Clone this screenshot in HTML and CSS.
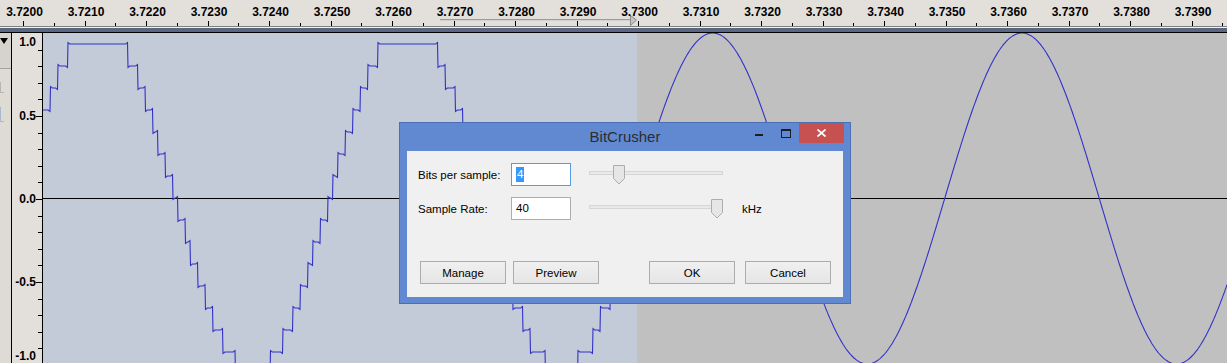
FILE: index.html
```html
<!DOCTYPE html>
<html lang="en">
<head>
  <meta charset="UTF-8" />
  <meta name="viewport" content="width=device-width, initial-scale=1.0"/>
  <title>BitCrusher</title>
  <link rel="stylesheet" href="styles.css">
</head>
<body>
  <div class="app">
    <div class="timeline">
      <svg class="ruler-marks" id="ruler-marks" width="1227" height="26">
        <line x1="440" y1="19.5" x2="631" y2="19.5" stroke="#9c9c9c"/>
        <line x1="440" y1="20.5" x2="631" y2="20.5" stroke="#d2d2d2"/>
        <polygon points="630.5,15.5 636.5,20 630.5,25.5" fill="#c4c4c4" stroke="#8c8c8c"/>
      </svg>
      <div class="ruler-labels">
        <span>3.7200</span><span>3.7210</span><span>3.7220</span><span>3.7230</span><span>3.7240</span>
        <span>3.7250</span><span>3.7260</span><span>3.7270</span><span>3.7280</span><span>3.7290</span>
        <span>3.7300</span><span>3.7310</span><span>3.7320</span><span>3.7330</span><span>3.7340</span>
        <span>3.7350</span><span>3.7360</span><span>3.7370</span><span>3.7380</span><span>3.7390</span>
      </div>
    </div>
    <div class="band"></div>

    <div class="track">
      <div class="track-ctrl">
        <div class="ctrl-head"><span class="drop"></span></div>
        <div class="ctrl-body">
          <span class="ghost ghost-l"></span>
          <span class="ghost ghost-r"></span>
        </div>
      </div>
      <div class="vruler">
        <svg class="vticks" id="vticks" width="30" height="330"></svg>
        <div class="vlabels">
          <span>1.0</span>
          <span>0.5</span>
          <span>0.0</span>
          <span>-0.5</span>
          <span>-1.0</span>
        </div>
      </div>
      <div class="wave">
        <svg id="wave" width="1184" height="330" viewBox="43 33 1184 330">
          <rect x="43" y="33" width="594" height="330" fill="#c3cad8"/>
          <rect x="637" y="33" width="590" height="330" fill="#c0c0c0"/>
          <line x1="43" y1="198.5" x2="1227" y2="198.5" stroke="#000"/>
          <polyline id="crushed" fill="none" stroke="#3232c8" stroke-width="1.1"/>
          <polyline id="clean" fill="none" stroke="#3232c8" stroke-width="1.1"/>
        </svg>
      </div>
    </div>

    <div class="dialog">
      <div class="titlebar">
        <span></span>
        <span class="title">BitCrusher</span>
        <div class="caption">
          <span class="cap-btn"><span class="min-icon"></span></span>
          <span class="cap-btn"><span class="max-icon"></span></span>
          <span class="cap-btn close">
            <svg width="9" height="8" viewBox="0 0 9 8"><path d="M0.5 0.5 L8.5 7.5 M8.5 0.5 L0.5 7.5" stroke="#fff" stroke-width="1.7"/></svg>
          </span>
        </div>
      </div>
      <div class="client">
        <div class="row">
          <span class="lbl">Bits per sample:</span>
          <div class="field focused"><span class="sel">4</span></div>
          <div class="slider">
            <div class="track-line"></div>
            <svg class="thumb" style="left: 24px" width="12" height="20" viewBox="0 0 12 20"><path d="M0.5 0.5 H11.5 V13.5 L6 19 L0.5 13.5 Z" fill="#e6e6e6" stroke="#adadad"/></svg>
          </div>
        </div>
        <div class="row">
          <span class="lbl">Sample Rate:</span>
          <div class="field">40</div>
          <div class="slider">
            <div class="track-line"></div>
            <svg class="thumb" style="left: 122px" width="12" height="20" viewBox="0 0 12 20"><path d="M0.5 0.5 H11.5 V13.5 L6 19 L0.5 13.5 Z" fill="#e6e6e6" stroke="#adadad"/></svg>
          </div>
          <span class="unit">kHz</span>
        </div>
        <div class="buttons">
          <button>Manage</button>
          <button>Preview</button>
          <span class="spacer"></span>
          <button class="wide-gap">OK</button>
          <button>Cancel</button>
        </div>
      </div>
    </div>
  </div>
  <script src="script.js"></script>
</body>
</html>
```

FILE: styles.css
```css
body {
  margin: 0;
  background: #c0c0c0;
  font-family: "Liberation Sans", Arial, sans-serif;
  overflow: hidden;
}
.app {
  position: relative;
  width: 1227px;
  height: 363px;
  overflow: hidden;
}

/* time ruler */
.timeline {
  position: relative;
  height: 26px;
  background: #e3e0db;
  border-bottom: 1px solid #7f7f7f;
}
.ruler-marks {
  position: absolute;
  left: 0; top: 0;
}
.ruler-labels {
  position: relative;
  display: flex;
  margin-left: -6.25px;
  padding-top: 5px;
  font-weight: bold;
  font-size: 12px;
  line-height: 14px;
  color: #000;
  white-space: nowrap;
}
.ruler-labels span {
  flex: 0 0 61.5px;
  text-align: center;
}
.band {
  height: 4px;
  background: #5d6681;
  border-top: 1px solid #f2f1ee;
  border-bottom: 1px solid #000;
}

/* track */
.track {
  display: flex;
  height: 330px;
}
.track-ctrl {
  width: 11px;
  border-right: 1px solid #000;
  background: #dedbd5;
  display: flex;
  flex-direction: column;
}
.ctrl-head {
  height: 35px;
  background: #d6d3cd;
  border-bottom: 1px solid #a5a29c;
}
.drop {
  display: block;
  width: 0; height: 0;
  margin-top: 5px;
  border-left: 4.5px solid transparent;
  border-right: 4.5px solid transparent;
  border-top: 6px solid #000;
}
.ctrl-body {
  display: flex;
  flex-direction: column;
  gap: 14px;
  padding-top: 13px;
}
.ghost {
  display: block;
  width: 3px;
  height: 10px;
  border-left: 1px solid #b9b6b0;
  border-bottom: 1px solid #b9b6b0;
}
.ghost-r {
  height: 14px;
  border-color: #a9b8cc;
}
.vruler {
  position: relative;
  width: 30px;
  border-right: 1px solid #000;
  background: #e3e0db;
}
.vticks {
  position: absolute;
  left: 0; top: 0;
}
.vlabels {
  position: relative;
  display: grid;
  grid-template-rows: 41.5px 83px 83px 83px 1fr;
  height: 100%;
  padding-right: 6px;
  font-weight: bold;
  font-size: 12px;
  line-height: 14px;
  text-align: right;
}
.vlabels span { align-self: center; }
.vlabels span:first-child { align-self: start; margin-top: 2px; }
.vlabels span:last-child { align-self: end; }
.wave {
  flex: 1;
}
.wave svg { display: block; }

/* effect dialog */
.dialog {
  position: absolute;
  left: 399px;
  top: 122px;
  width: 452px;
  height: 182px;
  box-sizing: border-box;
  background: #6189d2;
  border: 1px solid #4a6fb5;
  display: flex;
  flex-direction: column;
}
.titlebar {
  height: 28px;
  display: grid;
  grid-template-columns: 1fr auto 1fr;
}
.title {
  align-self: center;
  font-size: 15px;
  color: #2c2c2c;
  padding-bottom: 1px;
}
.caption {
  display: flex;
  justify-content: flex-end;
  align-items: flex-start;
  padding-right: 6px;
}
.cap-btn {
  width: 27px;
  height: 20px;
  display: flex;
  align-items: center;
  justify-content: center;
}
.cap-btn.close {
  width: 45px;
  background: #c75050;
}
.min-icon {
  width: 8px;
  height: 2px;
  margin-top: 4px;
  background: #1e1e1e;
}
.max-icon {
  width: 8px;
  height: 6px;
  border: 1px solid #1e1e1e;
  border-top-width: 2px;
}
.client {
  flex: 1;
  margin: 0 7px 6px 7px;
  background: #f0f0f0;
  padding: 12px 12px 13px 11px;
  display: flex;
  flex-direction: column;
  gap: 11px;
  font-size: 11.5px;
  color: #000;
}
.row {
  display: flex;
  align-items: center;
  height: 23px;
}
.lbl {
  width: 93px;
}
.field {
  width: 60px;
  height: 23px;
  box-sizing: border-box;
  border: 1px solid #abadb3;
  background: #fff;
  padding: 3px 0 0 4px;
  line-height: 15px;
}
.field.focused {
  border-color: #569de5;
}
.sel {
  display: inline-block;
  background: #3399ff;
  color: #fff;
  padding: 0 1px;
  line-height: 15px;
}
.slider {
  position: relative;
  width: 134px;
  height: 23px;
  margin-left: 18px;
}
.track-line {
  margin-top: 8px;
  height: 2px;
  background: #e7eaea;
  border: 1px solid #d6d6d6;
}
.thumb {
  position: absolute;
  top: 2px;
}
.unit {
  margin-left: 19px;
}
.buttons {
  margin-top: auto;
  margin-left: 2px;
  display: flex;
  gap: 7px;
}
.buttons button {
  width: 86px;
  height: 23px;
  border: 1px solid #acacac;
  background: linear-gradient(#f0f0f0, #e5e5e5);
  font-family: "Liberation Sans", Arial, sans-serif;
  font-size: 11.5px;
  color: #000;
  padding: 0;
}
.spacer { flex: 1; }
.buttons .wide-gap { margin-right: 3px; }
```

FILE: script.js
```js
const NS = "http://www.w3.org/2000/svg";

function addLine(svg, x1, y1, x2, y2, color) {
  const l = document.createElementNS(NS, "line");
  l.setAttribute("x1", x1);
  l.setAttribute("y1", y1);
  l.setAttribute("x2", x2);
  l.setAttribute("y2", y2);
  l.setAttribute("stroke", color);
  svg.appendChild(l);
}

// time ruler ticks
const marks = document.getElementById("ruler-marks");
for (let i = 0; i < 21; i++) {
  const x = Math.floor(23.5 + 61.5 * i) + 0.5;
  addLine(marks, x, 21, x, 26, "#000");
  const m = Math.floor(23.5 + 61.5 * i + 30.75) + 0.5;
  addLine(marks, m, 23, m, 26, "#000");
}

// amplitude ruler ticks
const vticks = document.getElementById("vticks");
for (let k = 1; k < 20; k++) {
  const y = Math.round(16.6 * k) + 0.5;
  addLine(vticks, k % 5 === 0 ? 24 : 26, y, 30, y, "#000");
}

// bit crushed part: sample and hold, 4 bit steps, a little ringing
const P = 309.3;
const h = 2.5;
const raw = [];
for (let x = 43; x <= 637; x += 0.5) {
  const xs = 43 + Math.floor((x - 43) / h) * h;
  const ys = 203.5 - 175 * Math.cos(2 * Math.PI * (xs - 96.5) / P);
  let k = Math.floor((ys - 38) / 22);
  k = Math.max(0, Math.min(15, k));
  raw.push([x, 44 + 22 * k]);
}
const W = 4;
const crushed = raw.map((p, i) => {
  let sum = 0, n = 0;
  for (let j = i - W; j <= i + W; j++) {
    if (j >= 0 && j < raw.length) { sum += raw[j][1]; n++; }
  }
  const y = p[1] + 0.14 * (p[1] - sum / n);
  return p[0] + "," + y.toFixed(1);
});
document.getElementById("crushed").setAttribute("points", crushed.join(" "));

// untouched sine on the right
const clean = [];
for (let x = 637; x <= 1227; x += 1) {
  const y = 198.5 - 165.5 * Math.cos(2 * Math.PI * (x - 712.7) / P);
  clean.push(x + "," + y.toFixed(1));
}
document.getElementById("clean").setAttribute("points", clean.join(" "));
```
